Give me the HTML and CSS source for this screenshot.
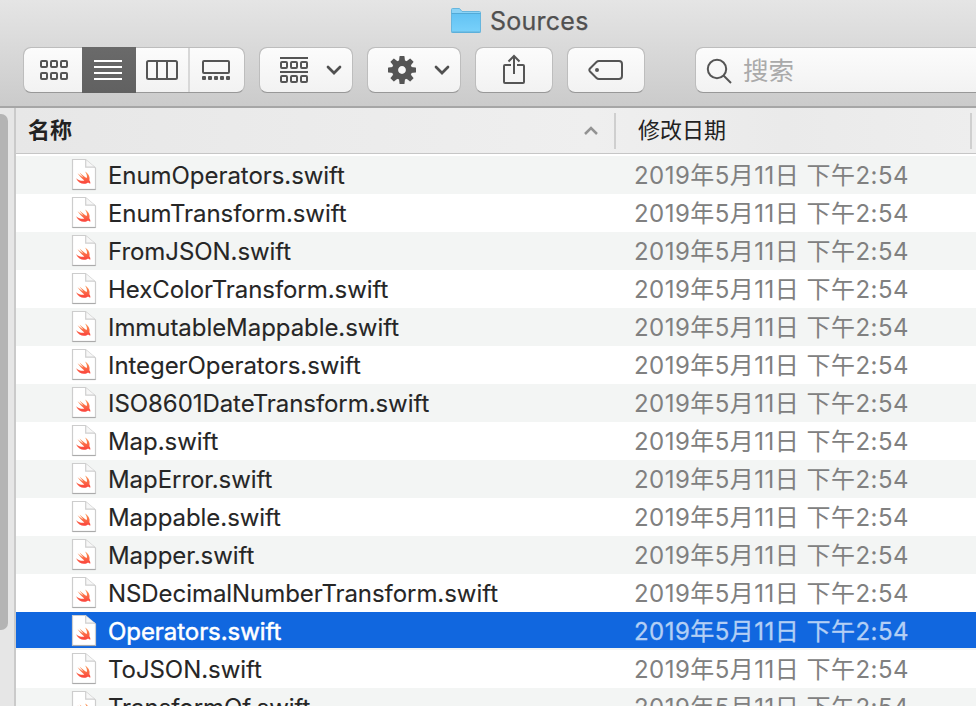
FILE: index.html
```html
<!DOCTYPE html>
<html lang="zh-CN">
<head>
<meta charset="utf-8">
<title>Sources</title>
<link rel="stylesheet" href="styles.css">
</head>
<body>
<svg class="defs" width="0" height="0">
  <defs>
    <linearGradient id="bird" x1="0" y1="0" x2="0" y2="1"><stop offset="0" stop-color="#fb9a55"/><stop offset="1" stop-color="#fb3f3a"/></linearGradient>
    <linearGradient id="fold" x1="0" y1="0" x2="0" y2="1"><stop offset="0" stop-color="#62c2f3"/><stop offset="1" stop-color="#77d0fa"/></linearGradient>
    <symbol id="swift" viewBox="0 0 26 34">
      <path class="page" d="M1.5 1.5H14.5L24.5 10V31.5H1.5Z"/>
      <path class="base" d="M1.5 31.5H24.5"/>
      <path class="fold" d="M14.7 1.8V9.2H23.8"/>
      <path fill="url(#bird)" d="M5 20.2C8.5 22.8 11.5 23.2 13.3 22.4C10.6 20.4 8.2 17.4 6.6 15.2C8.8 17 11 18.6 12.4 19.4C11 18 9.4 15.8 8.6 14.4C11 16.6 14 19 15.8 20.1C16.4 18 15.4 15.4 14 13.6C17.4 15.6 19.2 18.8 18.4 22.2C19.6 23.7 19.5 25.6 19 26C18.1 24.5 16.8 24.7 15.9 25.2C12 26.9 7.4 25 5 20.2Z"/>
    </symbol>
    <symbol id="chev" viewBox="0 0 16 10"><path d="M2 2L8 8L14 2" fill="none" stroke="#505050" stroke-width="2.7" stroke-linecap="round"/></symbol>
  </defs>
</svg>
<div class="window">
  <header class="toolbar">
    <div class="title">
      <svg class="folder" width="32" height="26" viewBox="0 0 32 26"><path d="M1.5 1.5Q1.5.5 2.5.5H9.5L12 3.5H29.5Q30.5 3.5 30.5 4.5V23.5Q30.5 24.5 29.5 24.5H2.5Q1.5 24.5 1.5 23.5Z" fill="#8bd3f6" stroke="#67b6de"/><path d="M2 5H30V23H2Z" fill="url(#fold)"/><path d="M1.5 5.5H30.5M1.5 24H30.5" stroke="#53aad7"/></svg>
      <span>Sources</span>
    </div>
    <div class="controls">
      <div class="segments">
        <div class="seg seg-icons"><svg width="28" height="20" viewBox="0 0 28 20"><g class="ic"><rect x="1" y="1" width="6" height="6" rx="1"/><rect x="11" y="1" width="6" height="6" rx="1"/><rect x="21" y="1" width="6" height="6" rx="1"/><rect x="1" y="13" width="6" height="6" rx="1"/><rect x="11" y="13" width="6" height="6" rx="1"/><rect x="21" y="13" width="6" height="6" rx="1"/></g></svg></div>
        <div class="seg seg-list"><svg width="28" height="20" viewBox="0 0 28 20"><path d="M0 1H28M0 7H28M0 13H28M0 19H28" stroke="#fff" stroke-width="2"/></svg></div>
        <div class="seg seg-cols"><svg width="32" height="20" viewBox="0 0 32 20"><g class="ic"><rect x="1" y="1" width="30" height="18" rx="1.5"/><path d="M11 1V19M21 1V19"/></g></svg></div>
        <div class="seg seg-gallery"><svg width="28" height="20" viewBox="0 0 28 20"><rect class="ic" x="1" y="1" width="26" height="12" rx="1"/><g fill="#555"><rect y="16" width="4" height="4" rx="1"/><rect x="6" y="16" width="4" height="4" rx="1"/><rect x="12" y="16" width="4" height="4" rx="1"/><rect x="18" y="16" width="4" height="4" rx="1"/><rect x="24" y="16" width="4" height="4" rx="1"/></g></svg></div>
      </div>
      <div class="button menu"><svg width="28" height="26" viewBox="0 0 28 26"><g class="ic"><path d="M0 1H28M0 15H28"/><rect x="1" y="5" width="6" height="6" rx="1"/><rect x="11" y="5" width="6" height="6" rx="1"/><rect x="21" y="5" width="6" height="6" rx="1"/><rect x="1" y="19" width="6" height="6" rx="1"/><rect x="11" y="19" width="6" height="6" rx="1"/><rect x="21" y="19" width="6" height="6" rx="1"/></g></svg><svg class="chev" width="16" height="10"><use href="#chev"/></svg></div>
      <div class="button menu"><svg width="28" height="28" viewBox="-14 -14 28 28"><circle r="7" fill="none" stroke="#555" stroke-width="6.2"/><g fill="#555"><path id="t" d="M-3-9L-2.5-13.5Q-2.5-14-2-14H2Q2.5-14 2.5-13.5L3-9Z"/><use href="#t" transform="rotate(45)"/><use href="#t" transform="rotate(90)"/><use href="#t" transform="rotate(135)"/><use href="#t" transform="rotate(180)"/><use href="#t" transform="rotate(225)"/><use href="#t" transform="rotate(270)"/><use href="#t" transform="rotate(315)"/></g></svg><svg class="chev" width="16" height="10"><use href="#chev"/></svg></div>
      <div class="button single"><svg width="24" height="32" viewBox="0 0 24 32"><g class="ic"><path d="M9 11H3Q2 11 2 12V28Q2 29 3 29H21Q22 29 22 28V12Q22 11 21 11H15M12 20V2M6.5 7.5L12 2L17.5 7.5"/></g></svg></div>
      <div class="button single"><svg width="36" height="22" viewBox="0 0 36 22"><path class="ic" d="M11 2H31Q34 2 34 5V17Q34 20 31 20H11Q9.5 20 8.5 19L2 12.5Q.7 11 2 9.5L8.5 3Q9.5 2 11 2Z"/><circle cx="9" cy="11" r="2" fill="#555"/></svg></div>
      <div class="search"><svg width="27" height="27" viewBox="0 0 27 27"><circle class="ic" cx="11" cy="11" r="9.2"/><path class="ic" d="M17.5 17.5L25 25"/></svg><span>搜索</span></div>
    </div>
  </header>
  <div class="content">
    <aside class="sidebar"><div class="thumb"></div></aside>
    <main class="list">
      <div class="head">
        <div class="h-name"><span>名称</span><svg width="16" height="10" viewBox="0 0 16 10"><path d="M2 8L8 2L14 8" fill="none" stroke="#939393" stroke-width="2.5"/></svg></div>
        <div class="h-date">修改日期</div>
      </div>
      <div class="rows">
        <div class="row"><svg class="file"><use href="#swift"/></svg><span class="name">EnumOperators.swift</span><span class="date">2019年5月11日 下午2:54</span></div>
        <div class="row"><svg class="file"><use href="#swift"/></svg><span class="name">EnumTransform.swift</span><span class="date">2019年5月11日 下午2:54</span></div>
        <div class="row"><svg class="file"><use href="#swift"/></svg><span class="name">FromJSON.swift</span><span class="date">2019年5月11日 下午2:54</span></div>
        <div class="row"><svg class="file"><use href="#swift"/></svg><span class="name">HexColorTransform.swift</span><span class="date">2019年5月11日 下午2:54</span></div>
        <div class="row"><svg class="file"><use href="#swift"/></svg><span class="name">ImmutableMappable.swift</span><span class="date">2019年5月11日 下午2:54</span></div>
        <div class="row"><svg class="file"><use href="#swift"/></svg><span class="name">IntegerOperators.swift</span><span class="date">2019年5月11日 下午2:54</span></div>
        <div class="row"><svg class="file"><use href="#swift"/></svg><span class="name">ISO8601DateTransform.swift</span><span class="date">2019年5月11日 下午2:54</span></div>
        <div class="row"><svg class="file"><use href="#swift"/></svg><span class="name">Map.swift</span><span class="date">2019年5月11日 下午2:54</span></div>
        <div class="row"><svg class="file"><use href="#swift"/></svg><span class="name">MapError.swift</span><span class="date">2019年5月11日 下午2:54</span></div>
        <div class="row"><svg class="file"><use href="#swift"/></svg><span class="name">Mappable.swift</span><span class="date">2019年5月11日 下午2:54</span></div>
        <div class="row"><svg class="file"><use href="#swift"/></svg><span class="name">Mapper.swift</span><span class="date">2019年5月11日 下午2:54</span></div>
        <div class="row"><svg class="file"><use href="#swift"/></svg><span class="name">NSDecimalNumberTransform.swift</span><span class="date">2019年5月11日 下午2:54</span></div>
        <div class="row selected"><svg class="file"><use href="#swift"/></svg><span class="name">Operators.swift</span><span class="date">2019年5月11日 下午2:54</span></div>
        <div class="row"><svg class="file"><use href="#swift"/></svg><span class="name">ToJSON.swift</span><span class="date">2019年5月11日 下午2:54</span></div>
        <div class="row"><svg class="file"><use href="#swift"/></svg><span class="name">TransformOf.swift</span><span class="date">2019年5月11日 下午2:54</span></div>
      </div>
    </main>
  </div>
</div>
</body>
</html>
```
FILE: styles.css
```css
* { box-sizing: border-box; }
body { margin: 0; font-family: Inter, "Noto Sans CJK SC", sans-serif; color: #262626; overflow: hidden; }
svg { display: block; flex: none; }
.defs { position: absolute; }
.window { width: 976px; height: 706px; display: flex; flex-direction: column; overflow: hidden; }
.toolbar { height: 108px; flex: none; background: linear-gradient(#e5e5e5, #cbcbcb); border-bottom: 2px solid #a6a6a6; }
.title { display: flex; height: 47px; padding: 8px 0 0 450px; font-size: 25px; line-height: 26px; color: #505050; letter-spacing: .25px; -webkit-text-stroke: .25px; }
.title span { margin-left: 8px; }
.controls { display: flex; }
.segments, .button, .search { height: 46px; border: 1px solid #bdbdbd; border-bottom-color: #989898; border-radius: 8px; background: linear-gradient(#fcfcfc, #f2f2f2); background-clip: padding-box; flex: none; }
.segments { display: flex; width: 222px; margin-left: 23px; }
.seg { display: flex; align-items: center; justify-content: center; }
.seg-icons { width: 58px; padding-left: 2px; }
.seg-list { width: 54px; height: 46px; margin-top: -1px; padding-right: 2px; background: linear-gradient(#6a6a6a, #616161); }
.seg-cols { width: 54px; border-right: 2px solid #d8d8d8; }
.seg-gallery { width: 54px; padding-right: 2px; }
.ic { fill: none; stroke: #555; stroke-width: 2; }
.button { display: flex; align-items: center; }
.menu { width: 94px; padding-left: 20px; margin-left: 14px; }
.chev { margin-left: 18px; }
.single { width: 78px; justify-content: center; margin-left: 14px; }
.search { width: 300px; margin-left: 50px; display: flex; align-items: center; padding-left: 10px; font-size: 25.5px; line-height: 40px; color: #aaa; }
.search svg { margin-top: 3px; }
.search span { margin: 1px 0 0 10px; }
.content { display: flex; flex: 1; min-height: 0; }
.sidebar { width: 16px; flex: none; background: #e6e6e6; border-right: 2px solid #cacaca; padding-top: 6px; }
.thumb { width: 8px; height: 516px; background: #b4b4b4; border-radius: 0 7px 7px 0; }
.list { width: 960px; flex: none; background: #fff; }
.head { height: 46px; display: flex; align-items: center; background: linear-gradient(90deg, #e7e7e7, #efefef 60%, #eaeaea 80%, #eee); border-bottom: 1px solid #c6c6c6; font-size: 22px; color: #222; }
.h-name { width: 600px; height: 36px; display: flex; align-items: center; justify-content: space-between; padding: 0 15px 0 12px; border-right: 2px solid #cfcfcf; font-weight: 600; }
.h-name span { line-height: 32px; margin-top: -2px; }
.h-date { width: 356px; height: 36px; line-height: 34px; padding-left: 22px; border-right: 2px solid #cfcfcf; }
.rows { padding-top: 2px; }
.row { height: 38px; display: flex; align-items: center; padding-left: 55px; font-size: 24px; line-height: 38px; }
.row:nth-child(odd) { background: #f3f5f4; }
.row.selected { background: linear-gradient(#1167df 36px, #f3f5f4 36px); color: #fff; }
.file { width: 26px; height: 34px; }
.page { fill: #fff; stroke: #cdcdcd; stroke-width: 1.2; }
.base { stroke: #ababab; stroke-width: 1.2; }
.fold { fill: #f7f7f7; stroke: #d0d0d0; stroke-width: 1.2; }
.selected .page, .selected .fold, .selected .base { stroke: #e4edf9; }
.name { width: 526px; margin-left: 11px; padding-top: 2px; white-space: nowrap; letter-spacing: -.06px; -webkit-text-stroke: .1px; }
.date { padding-top: 2px; color: #808080; white-space: nowrap; letter-spacing: .47px; }
.selected .name { -webkit-text-stroke: .5px; }
.selected .date { color: #b3cff5; -webkit-text-stroke: .3px; }
```
